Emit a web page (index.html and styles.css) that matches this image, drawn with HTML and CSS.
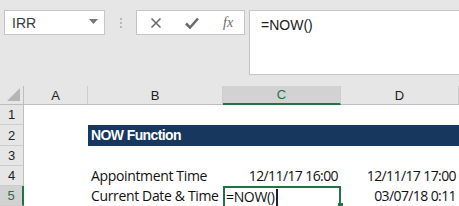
FILE: index.html
```html
<!DOCTYPE html>
<html>
<head>
<meta charset="utf-8">
<link rel="stylesheet" href="styles.css">
</head>
<body>
<div class="toolbar">
  <div class="namebox">
    <span class="name">IRR</span>
    <svg class="caret" width="9" height="5" viewBox="0 0 9 5"><path d="M0 0h9L4.5 5z" fill="#777"/></svg>
  </div>
  <div class="dots"><i></i><i></i><i></i></div>
  <div class="fbtns">
    <svg width="12" height="12" viewBox="0 0 12 12"><path d="M1.5 1.5l9 9M10.5 1.5l-9 9" stroke="#6b6b6b" stroke-width="1.6" fill="none"/></svg>
    <svg width="14" height="12" viewBox="0 0 14 12"><path d="M1 6.5l4 4L13 1.5" stroke="#6b6b6b" stroke-width="2.6" fill="none"/></svg>
    <span class="fx">fx</span>
  </div>
  <div class="formula">=NOW()</div>
</div>
<div class="sheet">
  <div class="corner"><svg width="13" height="13" viewBox="0 0 13 13"><path d="M13 0V13H0z" fill="#b5b5b5"/></svg></div>
  <div class="ch">A</div>
  <div class="ch">B</div>
  <div class="ch sel">C</div>
  <div class="ch">D</div>

  <div class="rh">1</div>
  <div class="c"></div><div class="c"></div><div class="c"></div><div class="c"></div>

  <div class="rh">2</div>
  <div class="c"></div>
  <div class="c title">NOW Function</div>
  <div class="c navy"></div>
  <div class="c navy"></div>

  <div class="rh">3</div>
  <div class="c"></div><div class="c"></div><div class="c"></div><div class="c"></div>

  <div class="rh">4</div>
  <div class="c"></div>
  <div class="c">Appointment Time</div>
  <div class="c num">12/11/17 16:00</div>
  <div class="c num">12/11/17 17:00</div>

  <div class="rh rsel">5</div>
  <div class="c"></div>
  <div class="c">Current Date &amp; Time</div>
  <div class="c active"><span>=NOW()</span><span class="cursor"></span><span class="handle"></span></div>
  <div class="c num">03/07/18 0:11</div>
</div>
</body>
</html>
```
FILE: styles.css
```css
html, body {
  margin: 0;
  padding: 0;
}
body {
  width: 459px;
  height: 206px;
  overflow: hidden;
  background: #e6e6e6;
  font-family: "Liberation Sans", Arial, sans-serif;
}
.toolbar {
  display: flex;
  align-items: flex-start;
  height: 86px;
  padding: 10px 0 0 4px;
  box-sizing: border-box;
}
.namebox {
  width: 101px;
  height: 25px;
  box-sizing: border-box;
  border: 1px solid #c6c6c6;
  background: #fff;
  display: flex;
  align-items: center;
  justify-content: space-between;
  padding: 0 6px 0 7px;
}
.name {
  font-size: 14px;
  color: #3a3a3a;
}
.caret {
  margin-top: -2px;
}
.dots {
  width: 31px;
  height: 25px;
  display: flex;
  flex-direction: column;
  align-items: center;
  justify-content: center;
  gap: 2px;
}
.dots i {
  display: block;
  width: 2px;
  height: 2px;
  background: #b8b8b8;
}
.fbtns {
  width: 109px;
  height: 25px;
  box-sizing: border-box;
  border: 1px solid #c6c6c6;
  background: #fff;
  display: flex;
  align-items: center;
  padding: 0 0 0 13px;
  gap: 23px;
}
.fx {
  font-family: "Liberation Serif", "Times New Roman", serif;
  font-style: italic;
  font-size: 14px;
  color: #6b6b6b;
  margin-left: 1px;
}
.formula {
  margin-left: 4px;
  flex: 1;
  height: 65px;
  box-sizing: border-box;
  border: 1px solid #c6c6c6;
  border-right: none;
  background: #fff;
  font-size: 14px;
  color: #222;
  padding: 6px 0 0 11px;
}
.sheet {
  display: grid;
  grid-template-columns: 24px 64px 135px 118px 118px;
  grid-template-rows: 19px 20px 21px 20px 20px 20px;
  background: #fff;
}
.corner {
  background: #e6e6e6;
  border-right: 1px solid #bdbdbd;
  border-bottom: 1px solid #bdbdbd;
  box-sizing: border-box;
  display: flex;
  align-items: flex-end;
  justify-content: flex-end;
  padding: 0 3px 3px 0;
}
.ch {
  background: #e6e6e6;
  border-right: 1px solid #cdcdcd;
  border-bottom: 1px solid #bdbdbd;
  box-sizing: border-box;
  display: flex;
  align-items: center;
  justify-content: center;
  font-size: 13px;
  color: #222;
}
.ch.sel {
  background: #d2d2d2;
  border-bottom: 2px solid #217346;
  color: #217346;
}
.rh {
  background: #e6e6e6;
  border-right: 1px solid #bdbdbd;
  border-bottom: 1px solid #cdcdcd;
  box-sizing: border-box;
  display: flex;
  align-items: center;
  justify-content: center;
  font-size: 13px;
  color: #222;
}
.rh.rsel {
  background: #d2d2d2;
  border-right: 2px solid #217346;
  color: #217346;
}
.c {
  font-family: "Open Sans", "Liberation Sans", sans-serif;
  font-size: 14px;
  letter-spacing: -0.35px;
  color: #111;
  display: flex;
  align-items: flex-end;
  padding: 0 3px 1px 3px;
  white-space: nowrap;
  box-sizing: border-box;
}
.num {
  justify-content: flex-end;
  letter-spacing: -0.6px;
}
.title {
  background: #17375e;
  color: #fff;
  font-weight: bold;
  font-family: "Liberation Sans", Arial, sans-serif;
  font-size: 14px;
  letter-spacing: -0.6px;
  align-items: center;
}
.navy {
  background: #17375e;
}
.active {
  position: relative;
  border: 2px solid #217346;
  border-bottom: none;
  padding: 0 1px 0 1px;
}
.cursor {
  display: inline-block;
  width: 2px;
  height: 17px;
  background: #222;
  margin-left: 1px;
}
.handle {
  position: absolute;
  right: -4px;
  bottom: 0;
  width: 5px;
  height: 3px;
  background: #217346;
  border-left: 1px solid #fff;
}
```
